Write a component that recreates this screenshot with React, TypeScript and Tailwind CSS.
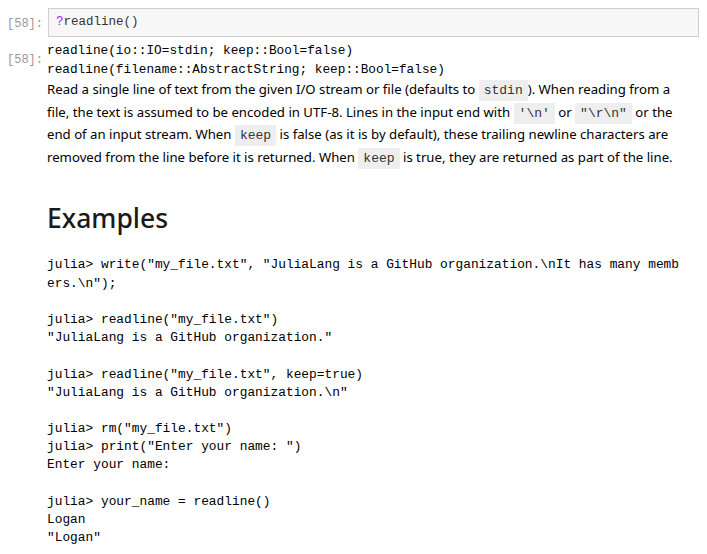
import React from "react";

const mono = "font-['Liberation_Mono','DejaVu_Sans_Mono',monospace]";
const sans = "font-['Noto_Sans','Open_Sans',sans-serif]";

function C({ children }: { children: React.ReactNode }) {
  return (
    <code className={`${mono} bg-[#eeeeee] px-[5px] py-[3px] text-[13px] leading-none text-[#333]`}>{children}</code>
  );
}

const codeLines = [
  'julia> write("my_file.txt", "JuliaLang is a GitHub organization.\\nIt has many memb',
  'ers.\\n");',
  "",
  'julia> readline("my_file.txt")',
  '"JuliaLang is a GitHub organization."',
  "",
  'julia> readline("my_file.txt", keep=true)',
  '"JuliaLang is a GitHub organization.\\n"',
  "",
  'julia> rm("my_file.txt")',
  'julia> print("Enter your name: ")',
  "Enter your name:",
  "",
  "julia> your_name = readline()",
  "Logan",
  '"Logan"',
];

export default function App() {
  return (
    <div className="w-[707px] h-[554px] bg-white overflow-hidden text-[#000]">
      <div className="flex pt-[8px] pr-[8px]">
        <div className={`${mono} w-[48px] pl-[7px] pt-[7px] text-[12px] text-[#999]`}>[58]:</div>
        <div className="flex-1 h-[29px] bg-[#f7f7f7] border border-[#cfcfcf] pl-[7px] flex items-center">
          <span className={`${mono} text-[12.5px] text-[#333]`}>
            <span className="text-[#aa22ff]">?</span>readline()
          </span>
        </div>
      </div>
      <div className="flex pt-[4px]">
        <div className={`${mono} w-[47px] pl-[7px] pt-[10px] text-[12px] text-[#999]`}>[58]:</div>
        <div className="flex-1">
          <div className={`${mono} text-[12.75px] leading-[19px] text-[#000] whitespace-pre`}>
            <div>readline(io::IO=stdin; keep::Bool=false)</div>
            <div>readline(filename::AbstractString; keep::Bool=false)</div>
          </div>
          <div className={`${sans} text-[13.2px] leading-[22.6px] text-[#000] whitespace-nowrap -mt-[1px]`}>
            <div>Read a single line of text from the given I/O stream or file (defaults to <C>stdin</C>). When reading from a</div>
            <div>file, the text is assumed to be encoded in UTF-8. Lines in the input end with <C>'\n'</C> or <C>"\r\n"</C> or the</div>
            <div>end of an input stream. When <C>keep</C> is false (as it is by default), these trailing newline characters are</div>
            <div>removed from the line before it is returned. When <C>keep</C> is true, they are returned as part of the line.</div>
          </div>
          <h1 className={`${sans} text-[26.5px] font-medium text-[#1a1a1a] mt-[32px] leading-[36px]`}>Examples</h1>
          <div className={`${mono} text-[12.85px] leading-[18.2px] text-[#000] whitespace-pre mt-[20px]`}>
            {codeLines.map((l, i) => (
              <div key={i} className="h-[18.2px]">{l}</div>
            ))}
          </div>
        </div>
      </div>
    </div>
  );
}
